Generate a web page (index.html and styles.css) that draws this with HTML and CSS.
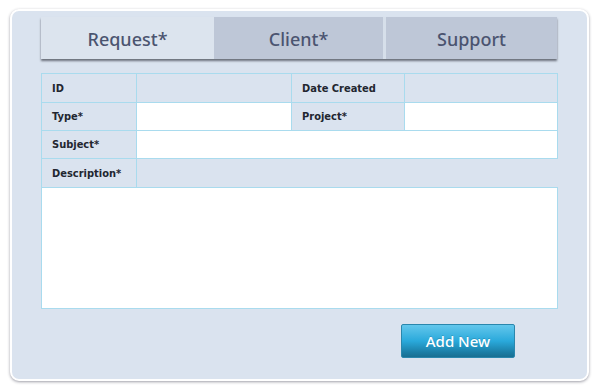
FILE: index.html
```html
<!DOCTYPE html>
<html>
<head>
<meta charset="utf-8">
<link rel="stylesheet" href="styles.css">
</head>
<body>
<div class="panel">
  <div class="tabs">
    <div class="tab active">Request*</div>
    <div class="tab">Client*</div>
    <div class="sep"></div>
    <div class="tab">Support</div>
  </div>
  <table class="form">
    <tr class="tall">
      <td class="lbl c1">ID</td>
      <td class="val c2"></td>
      <td class="lbl c3">Date Created</td>
      <td class="val c4"></td>
    </tr>
    <tr>
      <td class="lbl">Type*</td>
      <td class="val input"></td>
      <td class="lbl">Project*</td>
      <td class="val input"></td>
    </tr>
    <tr>
      <td class="lbl">Subject*</td>
      <td class="val input" colspan="3"></td>
    </tr>
    <tr class="tall">
      <td class="lbl">Description*</td>
      <td class="val open" colspan="3"></td>
    </tr>
    <tr>
      <td class="area" colspan="4"></td>
    </tr>
  </table>
  <div class="actions">
    <button class="btn">Add New</button>
  </div>
</div>
</body>
</html>
```
FILE: styles.css
```css
html, body {
  margin: 0;
  padding: 0;
  background: #ffffff;
  width: 600px;
  height: 391px;
  overflow: hidden;
}
body {
  padding: 9px 0 0 10px;
  box-sizing: border-box;
  font-family: "DejaVu Sans Condensed", "DejaVu Sans", sans-serif;
  font-stretch: condensed;
}
.panel {
  width: 579px;
  height: 372px;
  box-sizing: border-box;
  border: 2px solid #ffffff;
  border-radius: 9px;
  background: #dae3ef;
  box-shadow: 0 1px 3px rgba(40, 40, 60, 0.45);
  padding: 6px 30px 0 29px;
  display: flex;
  flex-direction: column;
}
.tabs {
  display: grid;
  grid-template-columns: 173px 169px 3px 171px;
  height: 42px;
  box-shadow: 0 2px 2px rgba(70, 74, 84, 0.75);
}
.tab {
  background: #bec7d7;
  color: #4b5470;
  font-family: "Noto Sans", "DejaVu Sans", sans-serif;
  font-stretch: normal;
  font-weight: 500;
  font-size: 18px;
  display: flex;
  align-items: center;
  justify-content: center;
  padding-top: 2px;
}
.tab.active {
  background: #dce4ee;
}
.sep {
  background: #d6dfea;
}
.form {
  margin-top: 14px;
  border-collapse: collapse;
  width: 514px;
  table-layout: fixed;
}
.form td {
  border: 1px solid #a9dbee;
  height: 27px;
  padding: 0;
}
.form tr.tall td {
  height: 28px;
}
.c1 { width: 95px; }
.c2 { width: 154px; }
.c3 { width: 113px; }
.c4 { width: 152px; }
.lbl {
  background: #dae3ef;
  font-size: 11px;
  font-weight: bold;
  color: #222630;
  padding-left: 10px !important;
  box-sizing: border-box;
}
.val { background: #dae3ef; }
.val.input { background: #ffffff; }
.val.open {
  border-right-color: #dae3ef !important;
  border-top-color: #ffffff !important;
}
.form td.area {
  height: 120px;
  background: #ffffff;
}
.actions {
  display: flex;
  justify-content: flex-end;
  padding-right: 42px;
  margin-top: 15px;
}
.btn {
  width: 114px;
  height: 34px;
  border: 1px solid #2a87ad;
  border-radius: 2px;
  background: linear-gradient(to bottom, #63c7ec 0%, #2aa9db 50%, #1b7ea6 85%, #186f92 100%);
  color: #ffffff;
  font-family: "Noto Sans", "DejaVu Sans", sans-serif;
  font-weight: 500;
  font-size: 15px;
  padding: 0;
  text-shadow: 0 -1px 0 rgba(0, 0, 0, 0.15);
}
```
